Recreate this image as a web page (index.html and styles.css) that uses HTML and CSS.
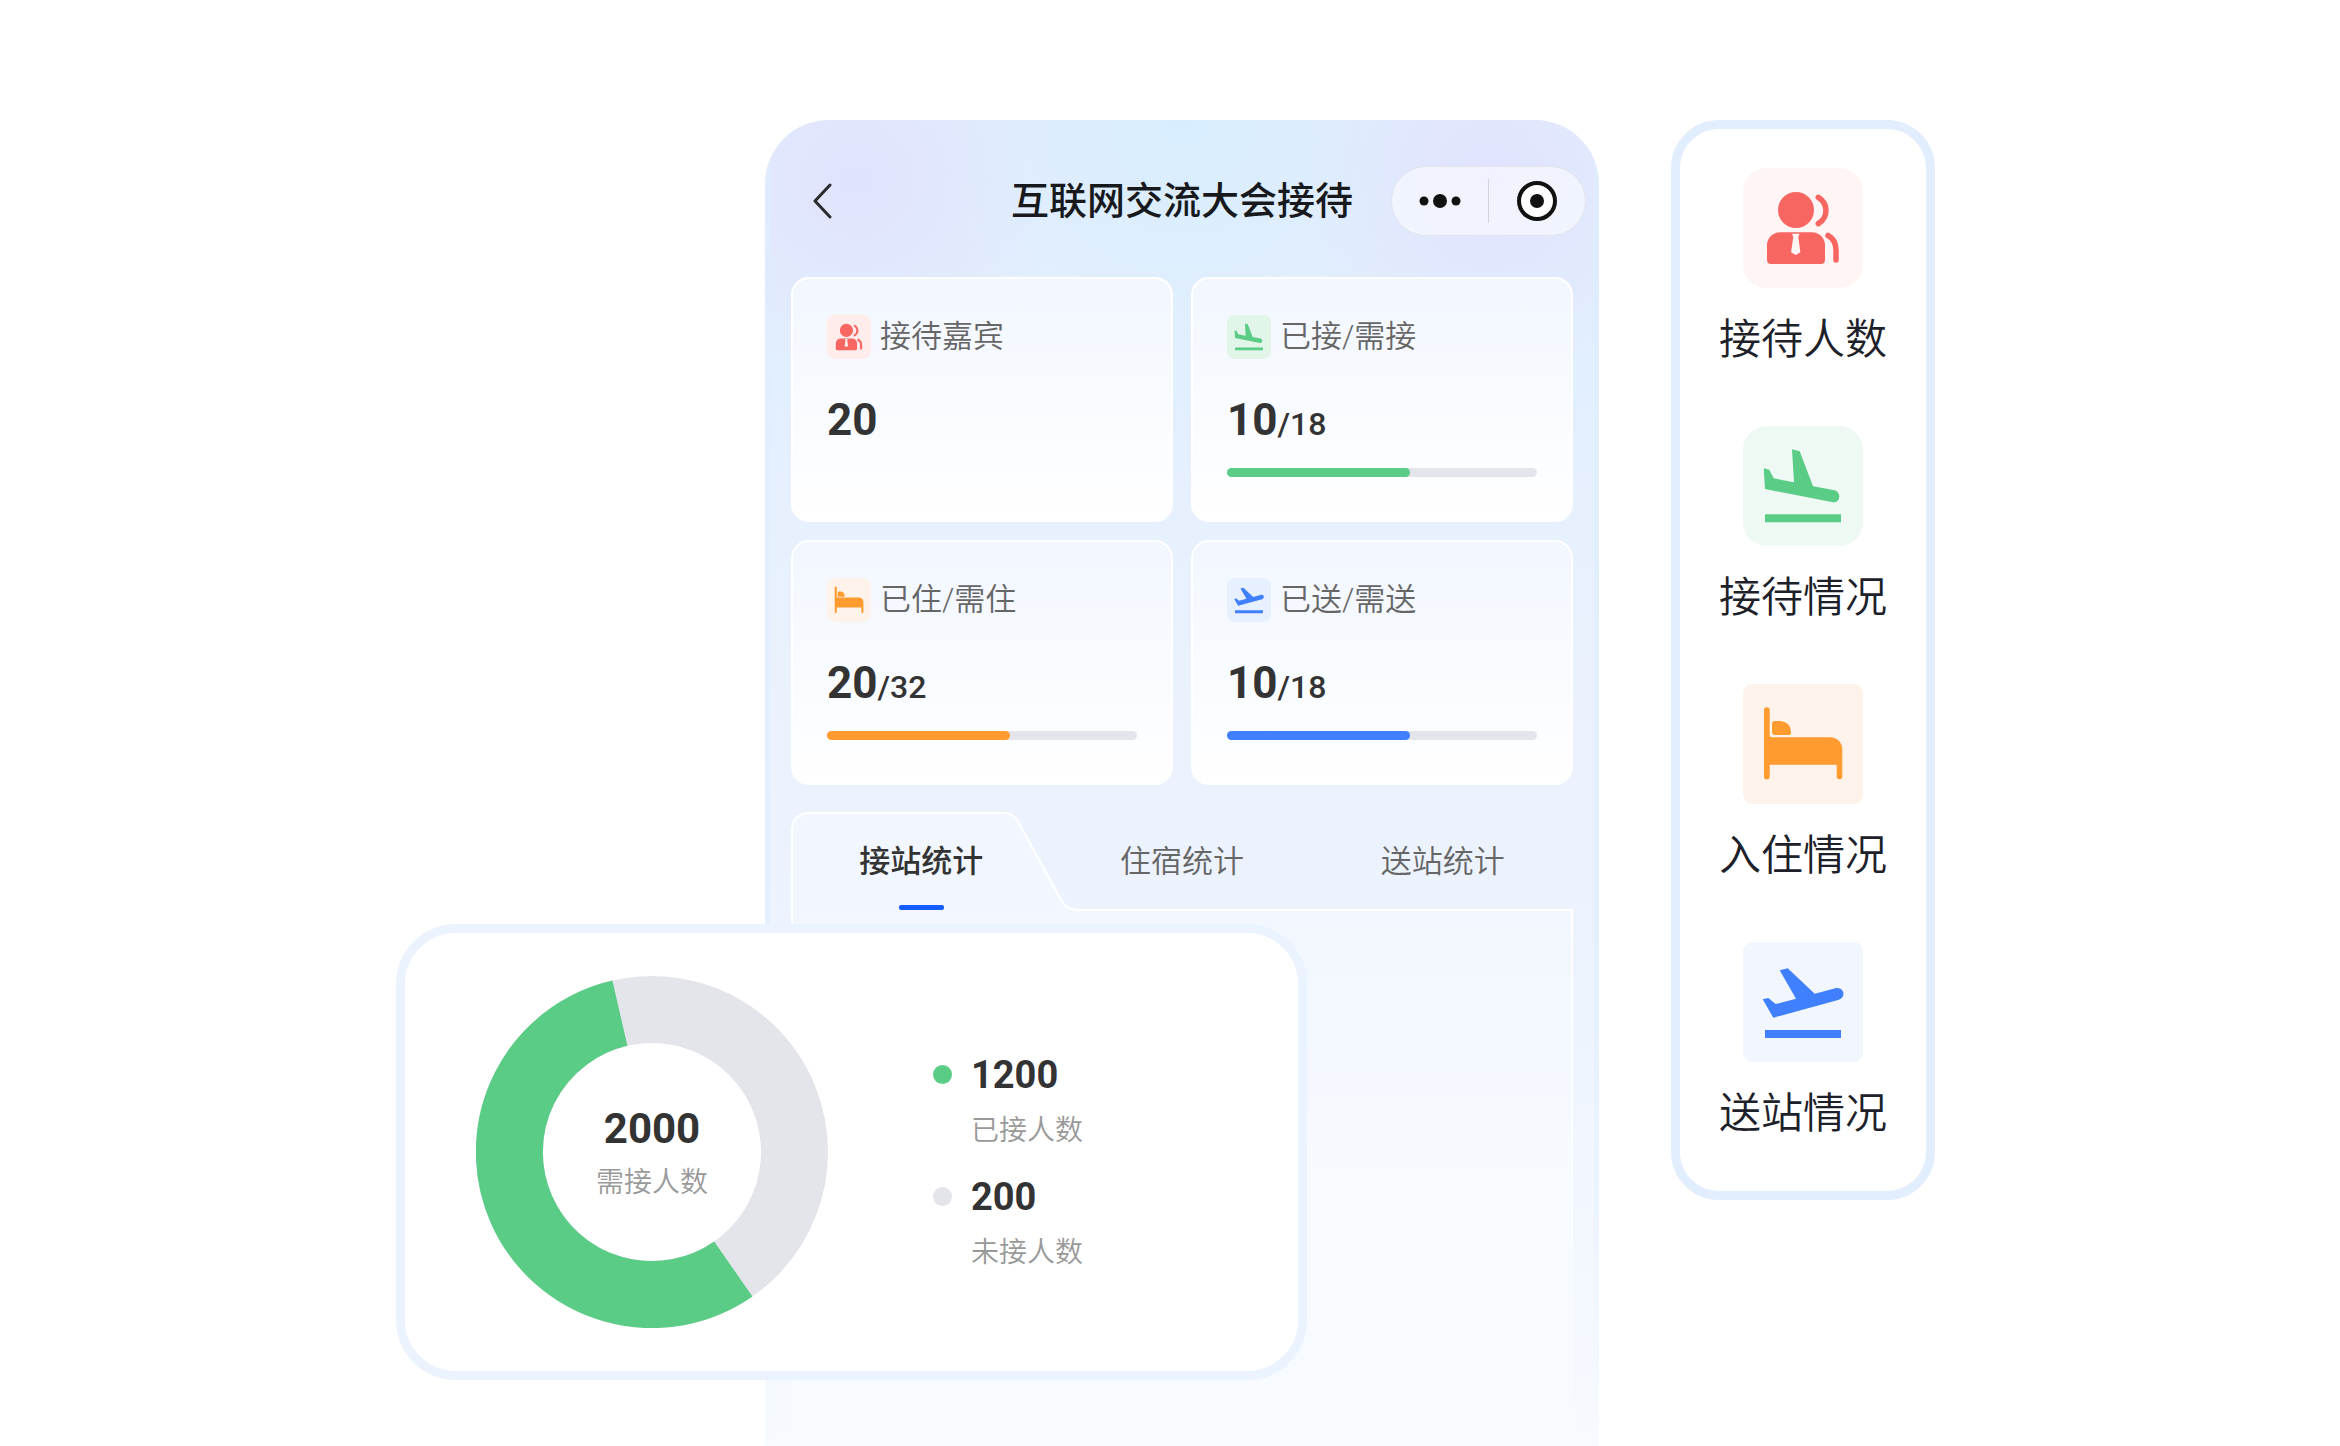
FILE: index.html
```html
<!DOCTYPE html>
<html lang="zh-CN">
<head>
<meta charset="UTF-8" />
<meta name="viewport" content="width=device-width, initial-scale=1" />
<title>互联网交流大会接待</title>
<link rel="stylesheet" href="styles.css">
</head>
<body>
  <!-- Shared icons -->
  <svg class="sprite" aria-hidden="true">
    <symbol id="icon-guest" viewBox="0 0 120 120">
      <circle cx="53" cy="42" r="18" fill="currentColor"/>
      <path fill="currentColor" fill-rule="evenodd" d="M37 64.300H69A13 13 0 0 1 82 77.300V92a4 4 0 0 1-4 4H28a4 4 0 0 1-4-4V77.300A13 13 0 0 1 37 64.300ZM49 65.700L50.300 69L48 84.300L52.700 87L57.400 84.300L55.300 69L56.500 65.700Z"/>
      <path fill="none" stroke="currentColor" stroke-width="5.500" stroke-linecap="round" d="M75.300 29.300C85.500 35.500 85.500 49.500 75.300 55.700M85 67.500C90.500 70.500 93 76 93 82V92"/>
    </symbol>
    <symbol id="icon-land" viewBox="0 0 120 120">
      <path fill="currentColor" d="M20.700 42.300L26.300 43.700L30.700 52.300L51 56.300L49 23.300L56.700 25.300L70 60.300L91.700 64.300C98.500 66.200 97.500 77.200 90 76.300L22 63ZM22 88.300H98V96.300H22Z"/>
    </symbol>
    <symbol id="icon-bed" viewBox="0 0 120 120">
      <path fill="currentColor" d="M21 26a2.800 2.800 0 0 1 5.700 0V51.300a2 2 0 0 0 2 2H87.300A12 12 0 0 1 99.300 65.300V92.500a2.800 2.800 0 0 1-5.600 0V80.700H26.700V92.500a2.800 2.800 0 0 1-5.700 0ZM32 37H37.500Q48 38.500 48 48.500Q48 51 45.500 51H32a3 3 0 0 1-3-3V40a3 3 0 0 1 3-3Z"/>
    </symbol>
    <symbol id="icon-takeoff" viewBox="0 0 120 120">
      <path fill="currentColor" d="M19.700 57.300L25.300 56L32.700 62L53 56.700L36.700 28.300L44.700 26.300L71.700 51.700L93.300 46C101 45 103.500 55 96 57.700L30.300 75.700ZM22 88H98V96H22Z"/>
    </symbol>
  </svg>

  <main class="stage">
    <!-- PHONE -->
    <section class="phone">
      <header class="navbar">
        <button class="back" type="button" aria-label="返回">
          <svg width="20" height="36" viewBox="0 0 20 36"><path d="M18 2L3 18L18 34" fill="none" stroke="#2b2b2b" stroke-width="3" stroke-linecap="round" stroke-linejoin="round"/></svg>
        </button>
        <h1 class="title">互联网交流大会接待</h1>
        <div class="capsule">
          <button type="button" aria-label="更多">
            <svg width="44" height="44" viewBox="0 0 44 44" fill="#111"><circle cx="6" cy="22" r="4.500"/><circle cx="22" cy="22" r="7"/><circle cx="38" cy="22" r="4.500"/></svg>
          </button>
          <button type="button" aria-label="关闭">
            <svg width="44" height="44" viewBox="0 0 44 44"><circle cx="22" cy="22" r="18" fill="#fff" stroke="#111" stroke-width="4"/><circle cx="22" cy="22" r="7" fill="#111"/></svg>
          </button>
        </div>
      </header>

      <div class="cards">
        <article class="card">
          <h2 class="card-head"><span class="icon small red"><svg><use href="#icon-guest"/></svg></span>接待嘉宾</h2>
          <p class="count">20</p>
        </article>
        <article class="card">
          <h2 class="card-head"><span class="icon small green"><svg><use href="#icon-land"/></svg></span>已接/需接</h2>
          <p class="count">10<span>/18</span></p>
          <div class="bar green"><div class="bar-fill" style="width: 59%"></div></div>
        </article>
        <article class="card">
          <h2 class="card-head"><span class="icon small orange"><svg><use href="#icon-bed"/></svg></span>已住/需住</h2>
          <p class="count">20<span>/32</span></p>
          <div class="bar orange"><div class="bar-fill" style="width: 59%"></div></div>
        </article>
        <article class="card">
          <h2 class="card-head"><span class="icon small blue"><svg><use href="#icon-takeoff"/></svg></span>已送/需送</h2>
          <p class="count">10<span>/18</span></p>
          <div class="bar blue"><div class="bar-fill" style="width: 59%"></div></div>
        </article>
      </div>

      <!-- TABS -->
      <div class="tabs">
        <svg class="tabs-shape" viewBox="0 0 782 100" preserveAspectRatio="none" aria-hidden="true">
          <path d="M1 100V19Q1 1 19 1H212Q223 1 228 11L269 86Q275 98 286 98H781V100" fill="#f2f7ff" stroke="#fff" stroke-width="2"/>
        </svg>
        <button class="tab active" type="button">接站统计</button>
        <button class="tab" type="button">住宿统计</button>
        <button class="tab" type="button">送站统计</button>
      </div>
      <div class="panel"></div>
    </section>

    <!-- DONUT CARD -->
    <section class="chart-card">
      <div class="donut">
        <svg viewBox="0 0 352 352" aria-hidden="true">
          <circle cx="176" cy="176" r="142.500" fill="none" stroke="#e4e5eb" stroke-width="67"/>
          <path d="M257.300 293A142.500 142.500 0 1 1 143.900 37.200" fill="none" stroke="#5acc86" stroke-width="67"/>
        </svg>
        <div class="donut-text">
          <strong>2000</strong>
          <span>需接人数</span>
        </div>
      </div>
      <ul class="legend">
        <li class="green"><strong>1200</strong><span>已接人数</span></li>
        <li class="gray"><strong>200</strong><span>未接人数</span></li>
      </ul>
    </section>

    <!-- SIDE MENU -->
    <ul class="menu">
      <li><span class="icon red"><svg><use href="#icon-guest"/></svg></span>接待人数</li>
      <li><span class="icon green"><svg><use href="#icon-land"/></svg></span>接待情况</li>
      <li><span class="icon square orange"><svg><use href="#icon-bed"/></svg></span>入住情况</li>
      <li><span class="icon square blue"><svg><use href="#icon-takeoff"/></svg></span>送站情况</li>
    </ul>
  </main>
</body>
</html>
```

FILE: styles.css
```css
* {
  box-sizing: border-box;
}
body {
  margin: 0;
  background: #fff;
  color: #333;
  font-family: Roboto, "Noto Sans CJK SC", sans-serif;
}
h1, h2, p, ul {
  margin: 0;
  padding: 0;
  list-style: none;
}
button {
  padding: 0;
  border: none;
  background: none;
  font: inherit;
  color: inherit;
  cursor: pointer;
}
svg {
  display: block;
}
.sprite {
  display: none;
}
.stage {
  display: grid;
  grid-template-columns: 369fr 834fr 72fr 264fr;
  grid-template-rows: auto;
  align-items: start;
  min-height: 100vh;
  padding: 120px 405px 0 396px;
}

/* phone */
.phone {
  grid-column: 2;
  grid-row: 1;
  display: flex;
  flex-direction: column;
  min-height: calc(100vh - 120px);
  border-radius: 64px 64px 0 0;
  background:
    linear-gradient(rgba(222, 237, 255, 0.6) 60%, rgba(222, 237, 255, 0)) left / 5px 100% no-repeat,
    linear-gradient(rgba(222, 237, 255, 0.6) 60%, rgba(222, 237, 255, 0)) right / 5px 100% no-repeat,
    radial-gradient(circle at 50% 0, #d8eefe 0, rgba(216, 238, 254, 0) 240px),
    radial-gradient(circle at 11% 60px, #e0e3fe 0, rgba(224, 227, 254, 0) 200px),
    radial-gradient(circle at 87% 60px, #e0e3fe 0, rgba(224, 227, 254, 0) 200px),
    linear-gradient(#e3edfd 0, #e2effd 260px, #e6f0fe 360px, #ebf2fd 600px, #eef4fe 900px, #f7faff 1326px);
}
.navbar {
  display: grid;
  grid-template-columns: 1fr auto 1fr;
  align-items: center;
  height: 157px;
  padding-top: 5px;
}
.back {
  justify-self: start;
  margin-left: 47px;
}
.title {
  font-size: 38px;
  font-weight: 500;
  line-height: 56px;
  color: #17191c;
}
.capsule {
  justify-self: end;
  display: flex;
  align-items: center;
  width: 195px;
  height: 70px;
  margin-right: 13px;
  border: 1px solid #e2e3ec;
  border-radius: 35px;
  background: rgba(255, 255, 255, 0.55);
}
.capsule button {
  flex: 1;
  display: flex;
  justify-content: center;
}
.capsule button + button {
  border-left: 1px solid #d0d2dc;
}

/* cards */
.cards {
  display: grid;
  grid-template-columns: 1fr 1fr;
  gap: 18px;
  padding: 0 26px;
}
.card {
  min-height: 245px;
  padding: 36px 34px;
  border: 2px solid #fff;
  border-radius: 18px;
  background: linear-gradient(#f2f6ff, #f8fbff 50%, #fff);
}
.card-head {
  display: flex;
  align-items: center;
  gap: 9px;
  font-size: 31px;
  font-weight: 350;
  line-height: 44px;
  color: #666;
}
.count {
  margin-top: 35px;
  font-size: 44px;
  font-weight: 700;
  line-height: 52px;
}
.count span {
  font-size: 32px;
  font-weight: 500;
}
.bar {
  height: 9px;
  margin-top: 18px;
  border-radius: 5px;
  background: #e4e5eb;
}
.bar-fill {
  height: 100%;
  border-radius: 5px;
  background: currentColor;
}

/* icons */
.icon {
  width: 120px;
  height: 120px;
  border-radius: 24px;
}
.icon svg {
  width: 100%;
  height: 100%;
}
.icon.square {
  border-radius: 9px;
}
.icon.small {
  width: 44px;
  height: 44px;
  border-radius: 8px;
}
.red { color: #f86662; }
.green { color: #5acc86; }
.orange { color: #ff9b2f; }
.blue { color: #4080ff; }
.gray { color: #e4e5eb; }
.icon.red { background: #fff5f4; }
.icon.green { background: #eef9f3; }
.icon.orange { background: #fdf3ea; }
.icon.blue { background: #f2f7ff; }
.icon.small.red { background: #ffeceb; }
.icon.small.green { background: #e1f5e8; }
.icon.small.blue { background: #e6f0ff; }

/* tabs */
.tabs {
  position: relative;
  display: grid;
  grid-template-columns: 1fr 1fr 1fr;
  height: 100px;
  margin: 27px 26px 0;
}
.tabs-shape {
  position: absolute;
  left: 0;
  top: 0;
  width: 100%;
  height: 100%;
}
.tab {
  position: relative;
  display: flex;
  flex-direction: column;
  align-items: center;
  justify-content: space-between;
  padding: 28px 0 2px;
  font-size: 31px;
  font-weight: 350;
  line-height: 44px;
  color: #666;
}
.tab.active {
  font-weight: 500;
  color: #333;
}
.tab.active::after {
  content: "";
  width: 45px;
  height: 5px;
  border-radius: 2px;
  background: #165dff;
}
.panel {
  flex: 1;
  margin: 0 26px;
  border: 2px solid;
  border-width: 0 2px;
  border-image: linear-gradient(#fff, rgba(255, 255, 255, 0)) 1;
  background: linear-gradient(#f2f7ff, #f7faff 50%);
}

/* donut card */
.chart-card {
  grid-column: 1 / span 2;
  grid-row: 1;
  z-index: 1;
  display: flex;
  align-items: center;
  gap: 105px;
  max-width: 911px;
  height: 456px;
  margin-top: 804px;
  padding-left: 71px;
  border: 9px solid #ebf3fe;
  border-radius: 60px;
  background: #fff;
}
.donut {
  display: grid;
  place-items: center;
  width: 352px;
}
.donut > * {
  grid-area: 1 / 1;
}
.donut > svg {
  width: 100%;
}
.donut-text {
  display: flex;
  flex-direction: column;
  align-items: center;
  gap: 6px;
  padding-top: 4px;
}
.donut-text strong {
  font-size: 42px;
  line-height: 52px;
}
.donut-text span, .legend span {
  font-size: 28px;
  font-weight: 350;
  line-height: 44px;
  color: #999;
}
.legend {
  display: grid;
  gap: 19px;
  padding-top: 20px;
}
.legend li {
  display: grid;
  grid-template-columns: 19px auto;
  align-items: center;
  column-gap: 19px;
  row-gap: 9px;
}
.legend li::before {
  content: "";
  height: 19px;
  border-radius: 50%;
  background: currentColor;
}
.legend strong {
  font-size: 38px;
  line-height: 50px;
  color: #333;
}
.legend span {
  grid-column: 2;
}

/* side menu */
.menu {
  grid-column: 4;
  grid-row: 1;
  display: grid;
  gap: 48px;
  padding: 39px 0;
  border: 9px solid #e2eefe;
  border-radius: 48px;
  background: #fff;
}
.menu li {
  display: flex;
  flex-direction: column;
  align-items: center;
  gap: 20px;
  height: 210px;
  font-size: 42px;
  font-weight: 350;
  line-height: 64px;
  color: #1d2129;
}
```
